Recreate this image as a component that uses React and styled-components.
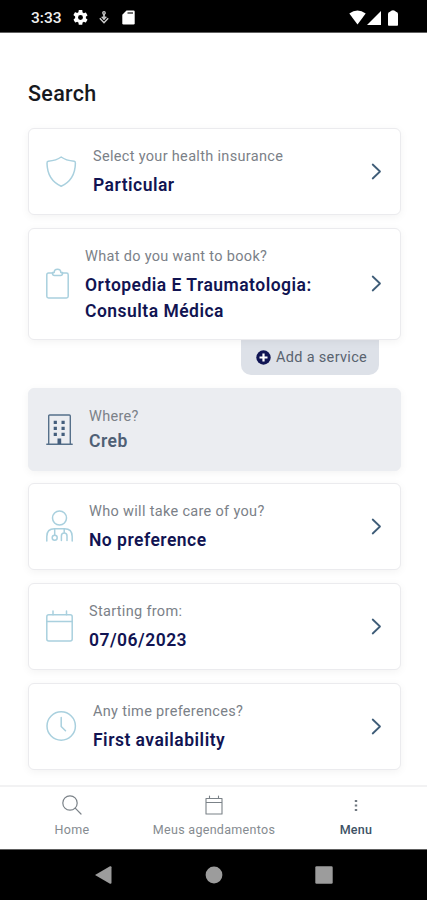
import React from 'react'
import styled, { createGlobalStyle } from 'styled-components'

const GlobalStyle = createGlobalStyle`
  * {
    box-sizing: border-box;
  }

  body {
    margin: 0;
    background: #fff;
    font-family: Roboto, 'Liberation Sans', sans-serif;
  }

  svg {
    display: block;
    flex-shrink: 0;
  }
`

const LineIcon = ({ width = 31, height = 31, children, ...rest }) => (
  <svg
    width={width}
    height={height}
    viewBox={`0 0 ${width} ${height}`}
    fill="none"
    stroke="#a9d0de"
    strokeWidth="1.5"
    strokeLinecap="round"
    strokeLinejoin="round"
    {...rest}
  >
    {children}
  </svg>
)

const ShieldIcon = () => (
  <LineIcon>
    <path d="M15.200 1C11.700 3.600 6 4.900 2.200 5.300C1.200 5.500 1 6 1 7.200C1.200 18 6 26 15.200 30.200C24.400 26 29.200 18 29.400 7.200C29.400 6 29.200 5.500 28.200 5.300C24.400 4.900 18.700 3.600 15.200 1Z" />
  </LineIcon>
)

const ClipboardIcon = () => (
  <LineIcon width={23}>
    <path d="M7 5H2.500Q.8 5 .8 6.700V28.300Q.8 30 2.500 30H20.500Q22.200 30 22.200 28.300V6.700Q22.200 5 20.500 5H16" />
    <path d="M6.500 4.500H8.200C8.200 .2 14.800 .2 14.800 4.500H16.500V5.500Q16.500 7.500 14.500 7.500H8.500Q6.500 7.500 6.500 5.500Z" />
  </LineIcon>
)

const BuildingIcon = () => (
  <LineIcon width={27} stroke="#56708a" strokeWidth="1.400">
    <path d="M.8 30.200H26.200M2.700 30V2Q2.700 1 3.700 1H23.300Q24.300 1 24.300 2V30" />
    <path
      d="M7.700 6.700H10.900V9.900H7.700ZM15.500 6.700H18.700V9.900H15.500ZM7.700 12.700H10.900V15.900H7.700ZM15.500 12.700H18.700V15.900H15.500ZM7.700 18.700H10.900V21.900H7.700ZM15.500 18.700H18.700V21.900H15.500ZM11.500 24.500H15.200V30H11.500Z"
      fill="#445e7c"
      stroke="none"
    />
  </LineIcon>
)

const DoctorIcon = () => (
  <LineIcon width={27} height={32}>
    <circle cx="13.500" cy="8" r="7" />
    <path d="M.8 31V26.500Q.8 18.800 8.500 18.800H18.500Q26.200 18.800 26.200 26.500V31" />
    <path d="M8.700 19V25M18.200 19V22.700M15.400 30.500V26Q15.400 23 18.200 23Q21 23 21 26V30.500" />
    <circle cx="8.700" cy="27.700" r="2.500" />
  </LineIcon>
)

const CalendarIcon = () => (
  <LineIcon width={27} height={32}>
    <rect x=".8" y="4.800" width="25.400" height="26.200" rx="2" />
    <path d="M.8 11.500H26.200M7 1V4.800M20.500 1V4.800" />
  </LineIcon>
)

const ClockIcon = () => (
  <LineIcon>
    <circle cx="15.200" cy="15" r="14.200" />
    <path d="M15.200 6.500V15.500L19.500 19.800" />
  </LineIcon>
)

const Chevron = () => (
  <LineIcon width={11} height={17} stroke="#3f5d78" strokeWidth="1.800">
    <path d="M1.700 1.500L9 8.500L1.700 15.500" />
  </LineIcon>
)

const fields = [
  {
    label: 'Select your health insurance',
    value: ['Particular'],
    icon: <ShieldIcon />,
    height: 87,
  },
  {
    label: 'What do you want to book?',
    value: ['Ortopedia E Traumatologia:', 'Consulta Médica'],
    icon: <ClipboardIcon />,
    height: 112,
    extra: 'Add a service',
  },
  {
    label: 'Where?',
    value: ['Creb'],
    icon: <BuildingIcon />,
    height: 83,
    disabled: true,
  },
  {
    label: 'Who will take care of you?',
    value: ['No preference'],
    icon: <DoctorIcon />,
    height: 87,
  },
  {
    label: 'Starting from:',
    value: ['07/06/2023'],
    icon: <CalendarIcon />,
    height: 87,
  },
  {
    label: 'Any time preferences?',
    value: ['First availability'],
    icon: <ClockIcon />,
    height: 87,
  },
]

const Field = ({ label, value, icon, height, disabled, extra }) => (
  <FieldItem $disabled={disabled}>
    <Card $height={height} $disabled={disabled}>
      {icon}
      <CardText>
        <Label>{label}</Label>
        <Value $disabled={disabled}>
          {value.map((line) => (
            <ValueLine key={line}>{line}</ValueLine>
          ))}
        </Value>
      </CardText>
      {!disabled && <Chevron />}
    </Card>
    {extra && (
      <AddButton>
        <svg width="15" height="15" viewBox="0 0 15 15">
          <circle cx="7.500" cy="7.500" r="7.200" fill="#101554" />
          <path d="M7.500 3.500V11.500M3.500 7.500H11.500" stroke="#fff" strokeWidth="2.200" />
        </svg>
        {extra}
      </AddButton>
    )}
  </FieldItem>
)

export default function App() {
  return (
    <Phone>
      <GlobalStyle />
      <StatusBar>
        <Time>3:33</Time>
        <svg width="15" height="15" viewBox="2 2 20 20" fill="#fff">
          <path d="M19.140 12.940c.04-.3.06-.61.06-.94s-.02-.64-.07-.94l2.030-1.580a.49.49 0 0 0 .12-.61l-1.920-3.320a.49.49 0 0 0-.59-.22l-2.390.96a7 7 0 0 0-1.620-.94l-.36-2.540A.48.48 0 0 0 13.920 2h-3.840a.48.48 0 0 0-.47.41l-.36 2.540a7 7 0 0 0-1.620.94l-2.390-.96a.48.48 0 0 0-.59.22L2.740 8.470a.48.48 0 0 0 .12.610l2.030 1.580a7 7 0 0 0 0 1.880l-2.030 1.980a.49.49 0 0 0-.12.610l1.920 3.320c.12.22.37.29.59.22l2.390-.96c.5.38 1.030.7 1.620.94l.36 2.540c.05.24.24.41.47.41h3.840c.24 0 .44-.17.47-.41l.36-2.540a7 7 0 0 0 1.620-.94l2.390.96c.22.08.47 0 .59-.22l1.920-3.320a.49.49 0 0 0-.12-.61zM12 15.300a3.300 3.300 0 1 1 0-6.600 3.300 3.300 0 0 1 0 6.600z" />
        </svg>
        <DownloadGlyph width="10" height="13" viewBox="0 0 10 13" fill="none" stroke="#ccc">
          <circle cx="5" cy="1.900" r="1.200" strokeWidth="1.300" />
          <path d="M5 3V8.500" strokeWidth="1.700" />
          <path d="M2.700 5.700L5 8L7.300 5.700M.8 7.300L5 11.700L9.200 7.300" strokeWidth="1.400" />
        </DownloadGlyph>
        <svg width="13" height="15" viewBox="0 0 13 15">
          <path
            d="M4.500 .5H11.500Q12.700 .5 12.700 1.700V13.300Q12.700 14.500 11.500 14.500H1.500Q.3 14.500 .3 13.300V4.700Z"
            fill="#fff"
          />
          <path d="M5.500 3H11" stroke="#222" strokeWidth="1.300" />
        </svg>
        <Signals>
          <svg width="17" height="15" viewBox="0 0 17 15" fill="#fff">
            <path d="M.3 3.500Q8.500 -2.500 16.700 3.500L8.500 14.500Z" />
          </svg>
          <svg width="14" height="15" viewBox="0 0 14 15" fill="#fff">
            <path d="M0 15L14 1V15Z" />
          </svg>
          <Battery width="10" height="16" viewBox="0 0 10 16" fill="#fff">
            <path d="M0 4Q0 2 2 1.800Q3 .3 5 .3Q7 .3 8 1.800Q10 2 10 4V15Q10 15.700 9.200 15.700H.8Q0 15.700 0 15Z" />
          </Battery>
        </Signals>
      </StatusBar>
      <Main>
        <Title>Search</Title>
        <FieldList>
          {fields.map((field) => (
            <Field key={field.label} {...field} />
          ))}
        </FieldList>
      </Main>
      <TabBar>
        <Tab>
          <LineIcon width={20} height={20} stroke="#7b8288" strokeWidth="1.200">
            <circle cx="8" cy="8" r="7.200" />
            <path d="M13.200 13.200L19 19" />
          </LineIcon>
          Home
        </Tab>
        <Tab>
          <LineIcon width={18} height={20} stroke="#7b8288" strokeWidth="1.100">
            <path d="M1 3.500H17V19H1ZM1 7.500H17M4.500 1V3.500M13.500 1V3.500" />
          </LineIcon>
          Meus agendamentos
        </Tab>
        <Tab $active>
          <svg width="4" height="20" viewBox="0 0 4 20" fill="#707880">
            <path d="M.8 5H3.200V7H.8ZM.8 9.500H3.200V11.500H.8ZM.8 14H3.200V16H.8Z" />
          </svg>
          Menu
        </Tab>
      </TabBar>
      <SystemBar>
        <svg width="18" height="18" viewBox="0 0 18 18" fill="#9c9c9c">
          <path d="M0 9L15 .3Q16.500 0 16.500 1.300V16.700Q16.500 18 15 17.700Z" />
        </svg>
        <svg width="18" height="18" viewBox="0 0 18 18" fill="#9c9c9c">
          <circle cx="9" cy="9" r="8.400" />
        </svg>
        <svg width="18" height="18" viewBox="0 0 18 18" fill="#9c9c9c">
          <rect x=".3" y=".3" width="17.400" height="17.400" rx="1.300" />
        </svg>
      </SystemBar>
    </Phone>
  )
}

const Phone = styled.div`
  display: flex;
  flex-direction: column;
  width: 427px;
  height: 900px;
  overflow: hidden;
  background: #fff;
`

const StatusBar = styled.header`
  display: flex;
  align-items: center;
  flex-shrink: 0;
  height: 33px;
  padding: 3px 29px 0 31px;
  background: #000;
  border-bottom: 1px solid #606060;
`

const Time = styled.span`
  width: 42px;
  color: #eee;
  font-size: 15.5px;
  font-weight: 500;
`

const DownloadGlyph = styled.svg`
  margin: 0 13px 0 11px;
`

const Signals = styled.div`
  display: flex;
  align-items: center;
  margin-left: auto;
  gap: 1px;
`

const Battery = styled.svg`
  margin-left: 6px;
`

const Main = styled.main`
  flex: 1;
  min-height: 0;
  padding: 45px 26px 0 28px;
`

const Title = styled.h1`
  margin: 0;
  color: #17191e;
  font-size: 21.5px;
  font-weight: 500;
  line-height: 32px;
  letter-spacing: 0.3px;
`

const FieldList = styled.div`
  display: flex;
  flex-direction: column;
  gap: 13px;
  margin-top: 17px;
`

const FieldItem = styled.div`
  margin-bottom: ${({ $disabled }) => ($disabled ? -1 : 0)}px;

  &:first-child {
    margin-top: 1px;
  }
`

const Card = styled.section`
  position: relative;
  display: flex;
  align-items: center;
  height: ${({ $height }) => $height}px;
  padding: 0 18px 1px 17px;
  border: 1px solid ${({ $disabled }) => ($disabled ? '#ebedf1' : '#ebebee')};
  border-radius: 6px;
  background: ${({ $disabled }) => ($disabled ? '#ebedf1' : '#fff')};
  box-shadow: 0 2px 8px rgba(0, 0, 0, 0.05);
`

const CardText = styled.div`
  flex: 1;
  padding-left: 16px;
  white-space: nowrap;
`

const Label = styled.div`
  color: #7b8188;
  font-size: 14.5px;
  line-height: 26px;
  letter-spacing: 0.32px;
`

const Value = styled.div`
  margin-top: ${({ $disabled }) => ($disabled ? -2 : 2)}px;
  color: ${({ $disabled }) => ($disabled ? '#4f6075' : '#111452')};
  font-size: 17.5px;
  font-weight: 600;
  line-height: 26px;
  letter-spacing: 0.48px;
`

const ValueLine = styled.div``

const AddButton = styled.button`
  display: flex;
  align-items: center;
  gap: 5px;
  width: 138px;
  height: 35px;
  margin: 0 22px 0 auto;
  padding: 0 0 0 15px;
  border: 0;
  border-radius: 0 0 10px 10px;
  background: #dde1e8;
  color: #59636f;
  font-family: inherit;
  font-size: 14.5px;
  letter-spacing: 0.32px;
  white-space: nowrap;
`

const TabBar = styled.nav`
  display: grid;
  grid-template-columns: repeat(3, 1fr);
  flex-shrink: 0;
  height: 64px;
  padding-left: 1px;
  border-top: 2px solid #f2f2f3;
  background: #fff;
`

const Tab = styled.a`
  display: flex;
  flex-direction: column;
  align-items: center;
  gap: 6px;
  padding-top: 8px;
  color: ${({ $active }) => ($active ? '#3d5265' : '#858b90')};
  font-size: 12.5px;
  font-weight: ${({ $active }) => ($active ? 500 : 400)};
  line-height: 17px;
  letter-spacing: 0.3px;
`

const SystemBar = styled.footer`
  display: flex;
  justify-content: center;
  align-items: center;
  gap: 92px;
  flex-shrink: 0;
  height: 51px;
  border-top: 1px solid #606060;
  background: #000;
`
